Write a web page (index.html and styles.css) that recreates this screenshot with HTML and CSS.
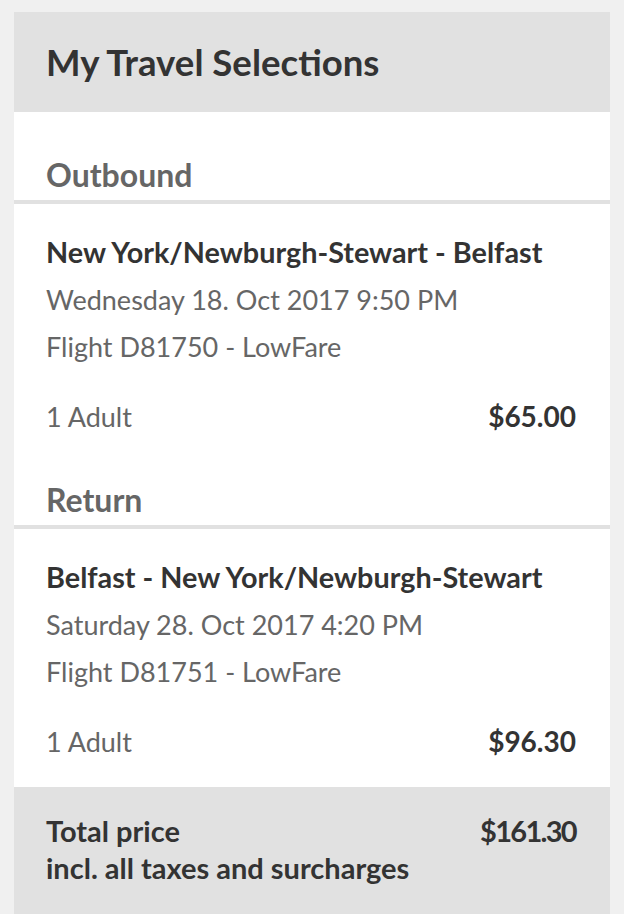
FILE: index.html
```html
<!DOCTYPE html>
<html lang="en">
<head>
<meta charset="utf-8">
<title>My Travel Selections</title>
<link rel="stylesheet" href="styles.css">
</head>
<body>
<div class="card">
  <div class="card-header">
    <h1 class="card-title">My Travel Selections</h1>
  </div>

  <div class="section section-first">
    <h2 class="section-title">Outbound</h2>
  </div>
  <div class="flight">
    <div class="route">New York/Newburgh-Stewart - Belfast</div>
    <div class="detail">Wednesday 18. Oct 2017 9:50 PM</div>
    <div class="detail">Flight D81750 - LowFare</div>
    <div class="fare-row">
      <span class="pax">1 Adult</span>
      <span class="price">$65.00</span>
    </div>
  </div>

  <div class="section">
    <h2 class="section-title">Return</h2>
  </div>
  <div class="flight flight-last">
    <div class="route">Belfast - New York/Newburgh-Stewart</div>
    <div class="detail">Saturday 28. Oct 2017 4:20 PM</div>
    <div class="detail">Flight D81751 - LowFare</div>
    <div class="fare-row">
      <span class="pax">1 Adult</span>
      <span class="price">$96.30</span>
    </div>
  </div>

  <div class="total">
    <div class="total-label">
      <div>Total price</div>
      <div>incl. all taxes and surcharges</div>
    </div>
    <div class="total-price">$161.30</div>
  </div>
</div>
</body>
</html>
```

FILE: styles.css
```css
html, body {
  margin: 0;
  padding: 0;
}
body {
  background: #f0f0f0;
  padding: 12px 14px 0;
  font-family: Lato, "Liberation Sans", sans-serif;
  color: #333;
}
.card {
  background: #fff;
}
.card-header {
  background: #e1e1e1;
  height: 100px;
  padding: 0 34px 0 32px;
  display: flex;
  align-items: center;
}
.card-title {
  margin: 0;
  font-size: 36.6px;
  font-weight: 700;
  color: #333;
}
.section {
  padding: 0 34px 0 32px;
  border-bottom: 4px solid #e1e1e1;
}
.section-first {
  padding-top: 38px;
}
.section-title {
  margin: 0;
  font-size: 32px;
  line-height: 50px;
  font-weight: 700;
  color: #666;
}
.flight {
  padding: 25px 34px 35px 32px;
  font-size: 27px;
  line-height: 47px;
}
.flight-last {
  padding-bottom: 22px;
}
.route {
  font-weight: 700;
  font-size: 28.8px;
  color: #333;
}
.detail {
  color: #666;
}
.fare-row {
  margin-top: 23px;
  display: flex;
  justify-content: space-between;
}
.pax {
  color: #666;
}
.price {
  font-weight: 700;
  font-size: 28px;
  color: #333;
}
.total {
  background: #e1e1e1;
  padding: 25px 34px 30px 32px;
  display: flex;
  justify-content: space-between;
  font-size: 29px;
  line-height: 37px;
  font-weight: 700;
  color: #333;
}
.total-price {
  letter-spacing: -1.7px;
}
```
